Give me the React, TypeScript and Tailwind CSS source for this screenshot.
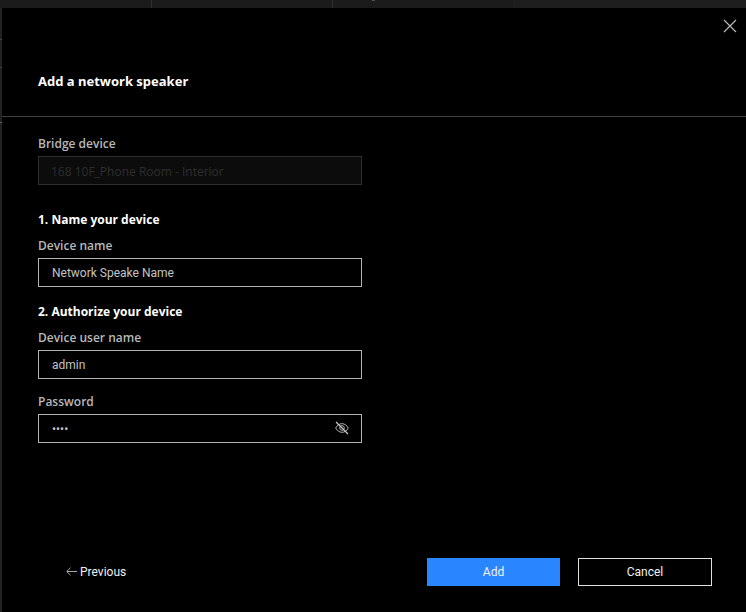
import { useState } from "react";
import type { ComponentProps } from "react";

type FieldProps = ComponentProps<"input"> & { id: string; label: string };

const Field = ({ id, label, ...props }: FieldProps) => (
  <div className="flex flex-col">
    <label
      htmlFor={id}
      className="pt-0.5 font-['Open_Sans',sans-serif] text-[12px] leading-6 font-semibold text-[#b8b8b8]"
    >
      {label}
    </label>
    <input
      id={id}
      className="h-[29px] w-full border border-[#b4b4b4] bg-black px-[13px] font-[Roboto,sans-serif] text-[12px] text-[#c4c4c4] outline-none disabled:border-[#2e2e2e] disabled:bg-[#0c0c0c] disabled:px-3 disabled:pt-0.5 disabled:font-['Open_Sans',sans-serif] disabled:text-[#2e2e2e]"
      {...props}
    />
  </div>
);

const CloseIcon = () => (
  <svg width="14" height="14" viewBox="0 0 14 14" fill="none" stroke="#b8b8b8" strokeWidth="1.2">
    <path d="M1 1l12 12M13 1L1 13" />
  </svg>
);

const EyeOffIcon = () => (
  <svg width="14" height="14" viewBox="0 0 14 14" fill="none" stroke="#b4b4b4" strokeWidth="1">
    <path d="M0.7 7C2.2 4.2 4.4 2.7 7 2.7S11.8 4.2 13.3 7C11.8 9.8 9.6 11.3 7 11.3S2.2 9.8 0.7 7z" />
    <circle cx="7" cy="7" r="2.3" />
    <path d="M1 1l12 12" stroke="#c8c8c8" strokeWidth="1.2" />
  </svg>
);

const ArrowIcon = () => (
  <svg width="11" height="10" viewBox="0 0 11 10" fill="none" stroke="#a8a8a8" strokeWidth="1">
    <path d="M11 4.5H1M4.5 0.8L0.7 4.5l3.8 3.7" />
  </svg>
);

const App = () => {
  const [name, setName] = useState("Network Speake Name");
  const [userName, setUserName] = useState("admin");
  const [password, setPassword] = useState("pass");
  const [visible, setVisible] = useState(false);

  return (
    <div className="flex min-h-screen flex-col bg-[#1b1b1b]">
      <div className="flex h-2">
        <div className="w-[152px] border-r border-[#303030]" />
        <div className="w-[181px] border-r border-[#303030]" />
        <div className="w-[180px] pl-[39px]">
          <div className="h-px w-[3px] bg-[#505050]" />
        </div>
        <div className="flex-1 bg-[#1e1e1e]" />
      </div>
      <div className="flex flex-1">
        <div className="flex w-0.5 flex-col bg-[#222]">
          <div className="h-8 border-b border-[#484848]" />
          <div className="h-7 border-b border-[#484848]" />
          <div className="h-[55px] border-b border-[#606060]" />
        </div>
        <main className="flex flex-1 flex-col bg-black">
          <header className="flex h-[109px] flex-col border-b border-[#404040]">
            <button
              type="button"
              aria-label="Close"
              className="mt-[11px] mr-[9px] self-end"
            >
              <CloseIcon />
            </button>
            <h1 className="mt-9 px-9 font-['Noto_Sans',sans-serif] text-[13px] leading-6 font-bold text-white">
              Add a network speaker
            </h1>
          </header>
          <form
            className="flex flex-1 flex-col pt-[13px]"
            onSubmit={(e) => e.preventDefault()}
          >
            <div className="ml-9 w-[324px]">
              <Field
                id="bridge"
                label="Bridge device"
                value="168 10F_Phone Room - Interior"
                disabled
              />
              <h2 className="mt-[21px] pt-0.5 font-['Open_Sans',sans-serif] text-[12px] leading-6 font-bold text-white">
                1. Name your device
              </h2>
              <Field
                id="name"
                label="Device name"
                value={name}
                onChange={(e) => setName(e.target.value)}
              />
              <h2 className="mt-[11px] pt-0.5 font-['Open_Sans',sans-serif] text-[12px] leading-6 font-bold text-white">
                2. Authorize your device
              </h2>
              <div className="flex flex-col gap-[9px]">
                <Field
                  id="user"
                  label="Device user name"
                  value={userName}
                  onChange={(e) => setUserName(e.target.value)}
                />
                <div className="relative">
                  <Field
                    id="password"
                    label="Password"
                    type={visible ? "text" : "password"}
                    value={password}
                    onChange={(e) => setPassword(e.target.value)}
                  />
                  <button
                    type="button"
                    aria-label="Show password"
                    className="absolute right-[13px] bottom-2"
                    onClick={() => setVisible(!visible)}
                  >
                    <EyeOffIcon />
                  </button>
                </div>
              </div>
            </div>
            <footer className="mt-auto flex items-center gap-[18px] pt-6 pr-[34px] pb-[26px] pl-16 font-[Roboto,sans-serif] text-[12px] text-[#f0f0f0]">
              <button type="button" className="mr-auto flex items-center gap-[3px]">
                <ArrowIcon />
                Previous
              </button>
              <button type="submit" className="h-7 w-[133px] bg-[#2a86ff]">
                Add
              </button>
              <button type="button" className="h-7 w-[134px] border border-[#e0e0e0]">
                Cancel
              </button>
            </footer>
          </form>
        </main>
      </div>
    </div>
  );
};

export default App;
